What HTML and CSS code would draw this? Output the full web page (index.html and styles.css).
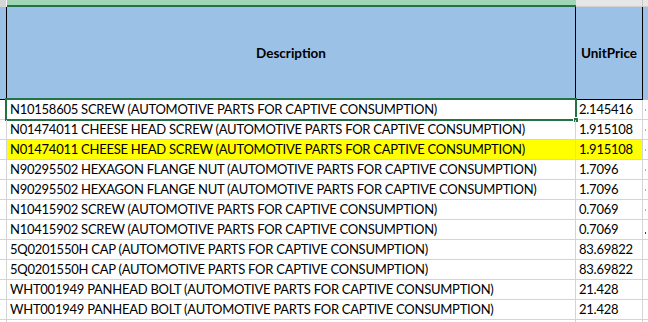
FILE: index.html
```html
<!DOCTYPE html>
<html>
<head>
<meta charset="utf-8">
<link rel="stylesheet" href="styles.css">
</head>
<body>
<div class="sheet">
  <div class="colheads">
    <div class="ch ch-a"></div>
    <div class="ch ch-desc"></div>
    <div class="ch ch-price"></div>
    <div class="ch ch-next"></div>
  </div>
  <div class="row head">
    <div class="c a"></div>
    <div class="c desc">Description</div>
    <div class="c price">UnitPrice</div>
    <div class="c next"></div>
  </div>
  <div class="row sel">
    <div class="c a"></div>
    <div class="c desc">N10158605 SCREW (AUTOMOTIVE PARTS FOR CAPTIVE CONSUMPTION)</div>
    <div class="c price">2.145416</div>
    <div class="c next"><span class="tick"></span></div>
    <div class="selection"><span class="handle"></span></div>
  </div>
  <div class="row">
    <div class="c a"></div>
    <div class="c desc">N01474011 CHEESE HEAD SCREW (AUTOMOTIVE PARTS FOR CAPTIVE CONSUMPTION)</div>
    <div class="c price">1.915108</div>
    <div class="c next"><span class="tick"></span></div>
  </div>
  <div class="row yellow">
    <div class="c a"></div>
    <div class="c desc">N01474011 CHEESE HEAD SCREW (AUTOMOTIVE PARTS FOR CAPTIVE CONSUMPTION)</div>
    <div class="c price">1.915108</div>
    <div class="c next"><span class="tick"></span></div>
  </div>
  <div class="row">
    <div class="c a"></div>
    <div class="c desc">N90295502 HEXAGON FLANGE NUT (AUTOMOTIVE PARTS FOR CAPTIVE CONSUMPTION)</div>
    <div class="c price">1.7096</div>
    <div class="c next"><span class="tick"></span></div>
  </div>
  <div class="row">
    <div class="c a"></div>
    <div class="c desc">N90295502 HEXAGON FLANGE NUT (AUTOMOTIVE PARTS FOR CAPTIVE CONSUMPTION)</div>
    <div class="c price">1.7096</div>
    <div class="c next"><span class="tick"></span></div>
  </div>
  <div class="row">
    <div class="c a"></div>
    <div class="c desc">N10415902 SCREW (AUTOMOTIVE PARTS FOR CAPTIVE CONSUMPTION)</div>
    <div class="c price">0.7069</div>
    <div class="c next"><span class="tick"></span></div>
  </div>
  <div class="row">
    <div class="c a"></div>
    <div class="c desc">N10415902 SCREW (AUTOMOTIVE PARTS FOR CAPTIVE CONSUMPTION)</div>
    <div class="c price">0.7069</div>
    <div class="c next"><span class="tick dark"></span></div>
  </div>
  <div class="row">
    <div class="c a"></div>
    <div class="c desc">5Q0201550H CAP (AUTOMOTIVE PARTS FOR CAPTIVE CONSUMPTION)</div>
    <div class="c price">83.69822</div>
    <div class="c next"></div>
  </div>
  <div class="row">
    <div class="c a"></div>
    <div class="c desc">5Q0201550H CAP (AUTOMOTIVE PARTS FOR CAPTIVE CONSUMPTION)</div>
    <div class="c price">83.69822</div>
    <div class="c next"></div>
  </div>
  <div class="row">
    <div class="c a"></div>
    <div class="c desc">WHT001949 PANHEAD BOLT (AUTOMOTIVE PARTS FOR CAPTIVE CONSUMPTION)</div>
    <div class="c price">21.428</div>
    <div class="c next"></div>
  </div>
  <div class="row">
    <div class="c a"></div>
    <div class="c desc">WHT001949 PANHEAD BOLT (AUTOMOTIVE PARTS FOR CAPTIVE CONSUMPTION)</div>
    <div class="c price">21.428</div>
    <div class="c next"></div>
  </div>
  <div class="row tail">
    <div class="c a"></div>
    <div class="c desc"></div>
    <div class="c price"></div>
    <div class="c next"></div>
  </div>
</div>
</body>
</html>
```

FILE: styles.css
```css
* { box-sizing: border-box; }
html, body { margin: 0; padding: 0; background: #ffffff; }
body { width: 648px; height: 322px; overflow: hidden; }

.sheet {
  width: 648px;
  height: 322px;
  overflow: hidden;
  font-family: "Lato", "Open Sans", sans-serif;
  font-size: 13px;
  color: #000000;
}

.colheads {
  display: grid;
  grid-template-columns: 7px 569px 67px 1fr;
  height: 7px;
}
.ch-a { background: #d6d6d6; border-right: 1px solid #f2f2f2; }
.ch-desc { background: #a0d5b5; border-bottom: 2px solid #217346; }
.ch-price { background: #e6e6e6; border-right: 1px solid #c8c8c8; border-bottom: 1px solid #d0d0d0; }
.ch-next { background: #e6e6e6; border-bottom: 1px solid #d0d0d0; }

.row {
  display: grid;
  grid-template-columns: 7px 569px 67px 1fr;
  height: 20px;
  position: relative;
}
.row.tail { height: 2px; }

.c {
  border-right: 1px solid #d4d4d4;
  border-bottom: 1px solid #d4d4d4;
  white-space: nowrap;
  overflow: hidden;
  display: flex;
  align-items: flex-end;
  line-height: 15px;
  padding-bottom: 2px;
  letter-spacing: -0.25px;
}
.c.desc { padding-left: 3px; }
.c.price { padding-left: 3px; }
.c.next { border-right: none; position: relative; }
.tail .c { border-bottom: none; }

.head { height: 93px; }
.head .c {
  background: #9bc2e6;
  border-right: 1px solid #000000;
  border-bottom: 1px solid #000000;
  align-items: center;
  justify-content: center;
  font-weight: bold;
  font-size: 13.5px;
  letter-spacing: 0;
  padding: 0;
}
.head .c.desc { border-bottom-color: #217346; }
.head .c.next { border-right: none; border-bottom-color: #9bc2e6; }

.yellow .c.desc, .yellow .c.price { background: #ffff00; }

.tick {
  position: absolute;
  left: 2px;
  top: 9px;
  width: 1px;
  height: 2px;
  background: #f0a040;
}
.tick.dark { background: #404040; top: 12px; }

.selection {
  position: absolute;
  left: 5px;
  top: -2px;
  width: 572px;
  height: 23px;
  border: 2px solid #217346;
  pointer-events: none;
}
.handle {
  position: absolute;
  right: -4px;
  bottom: -4px;
  width: 6px;
  height: 6px;
  background: #217346;
  border: 1px solid #ffffff;
}
```
